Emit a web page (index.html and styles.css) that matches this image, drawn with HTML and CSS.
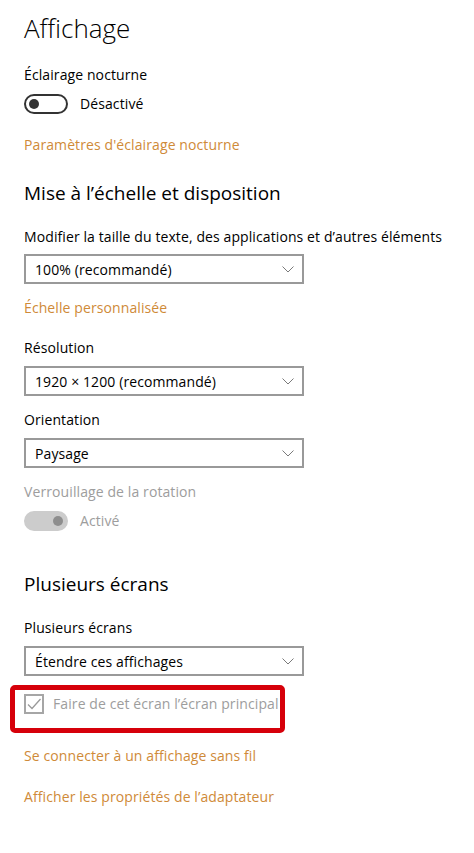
FILE: index.html
```html
<!DOCTYPE html>
<html>
<head>
    <title>Affichage</title>
    <meta name="viewport" content="width=device-width, initial-scale=1.0">
    <link rel="stylesheet" href="styles.css">
</head>
<body>
    <div class="page">
        <h1>Affichage</h1>

        <div class="label night-label">Éclairage nocturne</div>
        <div class="toggle-row">
            <span class="toggle"><span class="knob"></span></span>
            <span>Désactivé</span>
        </div>
        <a class="link night-link" href="#">Paramètres d'éclairage nocturne</a>

        <h2 class="scale-title">Mise à l’échelle et disposition</h2>

        <div class="label first-label">Modifier la taille du texte, des applications et d’autres éléments</div>
        <div class="dropdown">
            <span>100% (recommandé)</span>
            <svg class="chevron" width="12" height="7" viewBox="0 0 12 7"><path d="M0.5 0.5 L6 6 L11.5 0.5" fill="none" stroke="#7a7a7a" stroke-width="1"/></svg>
        </div>
        <a class="link after-drop" href="#">Échelle personnalisée</a>

        <div class="label after-link">Résolution</div>
        <div class="dropdown">
            <span>1920 × 1200 (recommandé)</span>
            <svg class="chevron" width="12" height="7" viewBox="0 0 12 7"><path d="M0.5 0.5 L6 6 L11.5 0.5" fill="none" stroke="#7a7a7a" stroke-width="1"/></svg>
        </div>

        <div class="label after-drop">Orientation</div>
        <div class="dropdown">
            <span>Paysage</span>
            <svg class="chevron" width="12" height="7" viewBox="0 0 12 7"><path d="M0.5 0.5 L6 6 L11.5 0.5" fill="none" stroke="#7a7a7a" stroke-width="1"/></svg>
        </div>

        <div class="label disabled after-drop">Verrouillage de la rotation</div>
        <div class="toggle-row disabled">
            <span class="toggle on"><span class="knob"></span></span>
            <span>Activé</span>
        </div>

        <h2 class="multi-title">Plusieurs écrans</h2>

        <div class="label">Plusieurs écrans</div>
        <div class="dropdown">
            <span>Étendre ces affichages</span>
            <svg class="chevron" width="12" height="7" viewBox="0 0 12 7"><path d="M0.5 0.5 L6 6 L11.5 0.5" fill="none" stroke="#7a7a7a" stroke-width="1"/></svg>
        </div>

        <div class="highlight">
            <div class="check-row">
                <span class="checkbox">
                    <svg width="16" height="16" viewBox="0 0 16 16"><path d="M2 8.5 L6 12.5 L14.5 3" fill="none" stroke="#9a9a9a" stroke-width="1.3"/></svg>
                </span>
                <span>Faire de cet écran l’écran principal</span>
            </div>
        </div>

        <a class="link wireless-link" href="#">Se connecter à un affichage sans fil</a>
        <a class="link adapter-link" href="#">Afficher les propriétés de l’adaptateur</a>
    </div>
</body>
</html>
```

FILE: styles.css
```css
body {
    margin: 0;
    background: #ffffff;
    color: #000000;
    font-family: "Open Sans", "Noto Sans", sans-serif;
    font-size: 14px;
    letter-spacing: 0.1px;
}
.page {
    padding: 0 24px 40px;
    display: flex;
    flex-direction: column;
    align-items: flex-start;
}
h1 {
    font-size: 26px;
    font-weight: 300;
    line-height: 40px;
    margin: 8px 0 0;
    letter-spacing: 0;
}
h2 {
    font-size: 19px;
    font-weight: 400;
    line-height: 28px;
    margin: 0;
    letter-spacing: 0;
}
.scale-title { margin-top: 25px; }
.multi-title { margin-top: 39px; }
.label {
    line-height: 18px;
    padding-top: 2px;
    margin-top: 19px;
}
.night-label { margin-top: 16px; }
.after-link { margin-top: 20px; }
.after-drop { margin-top: 13px; }
.disabled { color: #9d9d9d; }

.toggle-row {
    display: flex;
    align-items: center;
    gap: 12px;
    height: 20px;
    margin-top: 10px;
    line-height: 20px;
}
.toggle {
    width: 44px;
    height: 20px;
    box-sizing: border-box;
    border: 2px solid #333333;
    border-radius: 10px;
    display: flex;
    align-items: center;
    padding: 0 3px;
}
.knob {
    width: 10px;
    height: 10px;
    border-radius: 50%;
    background: #333333;
}
.toggle.on {
    border-color: #cccccc;
    background: #cccccc;
    justify-content: flex-end;
}
.toggle.on .knob { background: #8e8e8e; }

.link {
    color: #cf8a38;
    text-decoration: none;
    line-height: 18px;
    padding-top: 2px;
}
.night-link { margin-top: 20px; }
.wireless-link { margin-top: 12px; }
.adapter-link { margin-top: 21px; }

.dropdown {
    width: 280px;
    height: 30px;
    box-sizing: border-box;
    border: 2px solid #999999;
    margin-top: 8px;
    padding: 0 8px 0 9px;
    display: flex;
    align-items: center;
    justify-content: space-between;
}
.label + .dropdown { margin-top: 9px; }
.first-label + .dropdown { margin-top: 8px; }

.highlight {
    margin-top: 9px;
    margin-left: -14px;
    width: 275px;
    height: 48px;
    box-sizing: border-box;
    border: 5px solid #d6000a;
    border-radius: 5px;
    padding: 4px 0 0 9px;
}
.check-row {
    display: flex;
    align-items: center;
    gap: 9px;
    color: #9d9d9d;
    height: 20px;
    line-height: 20px;
}
.checkbox {
    width: 20px;
    height: 20px;
    box-sizing: border-box;
    border: 2px solid #a6a6a6;
    display: flex;
    align-items: center;
    justify-content: center;
}
```
